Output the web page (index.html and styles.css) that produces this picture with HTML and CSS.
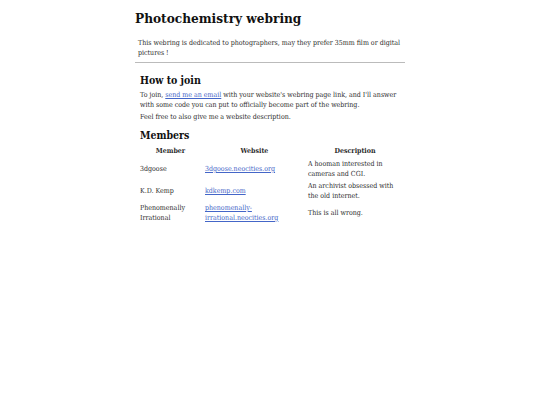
FILE: index.html
```html
<!DOCTYPE html>
<html lang="en">
<head>
    <meta charset="UTF-8">
    <title>Photochemistry webring</title>
    <link rel="stylesheet" href="styles.css">
</head>
<body>
    <div class="container">
        <h1>Photochemistry webring</h1>
        <div class="intro">
            <p>This webring is dedicated to photographers, may they prefer 35mm film or digital pictures !</p>
        </div>

        <div class="section">
            <h2>How to join</h2>
            <p>To join, <a href="#">send me an email</a> with your website's webring page link, and I'll answer with some code you can put to officially become part of the webring.</p>
            <p>Feel free to also give me a website description.</p>

            <h2>Members</h2>
            <table class="members">
                <thead>
                    <tr>
                        <th class="col-member">Member</th>
                        <th class="col-site">Website</th>
                        <th class="col-desc">Description</th>
                    </tr>
                </thead>
                <tbody>
                    <tr>
                        <td>3dgoose</td>
                        <td><a href="#">3dgoose.neocities.org</a></td>
                        <td>A hooman interested in cameras and CGI.</td>
                    </tr>
                    <tr>
                        <td>K.D. Kemp</td>
                        <td><a href="#">kdkemp.com</a></td>
                        <td>An archivist obsessed with the old internet.</td>
                    </tr>
                    <tr>
                        <td>Phenomenally Irrational</td>
                        <td><a href="#">phenomenally-irrational.neocities.org</a></td>
                        <td>This is all wrong.</td>
                    </tr>
                </tbody>
            </table>
        </div>
    </div>
</body>
</html>
```

FILE: styles.css
```css
body {
    font-family: "DejaVu Serif Condensed", "DejaVu Serif", serif;
    background: #fff;
    color: #2b2b2b;
    margin: 0;
}

.container {
    width: 270px;
    margin: 0 auto;
}

h1 {
    font-size: 13.5px;
    line-height: 18px;
    margin: 9px 0 0 0;
    color: #111;
}

.intro {
    padding: 11px 3px 4px 3px;
    border-bottom: 1px solid #bbb;
}

p {
    font-size: 7px;
    line-height: 10px;
    margin: 0;
}

.section {
    padding: 4px 5px 0 5px;
}

.section p {
    margin-bottom: 2px;
}

h2 {
    font-size: 10.5px;
    line-height: 14px;
    margin: 6px 0 3px 0;
    color: #111;
}

a {
    color: #4466c8;
}

.members {
    border-collapse: collapse;
    font-size: 7px;
    line-height: 10px;
    width: 266px;
    margin-left: -2px;
}

.members th {
    font-weight: bold;
    text-align: center;
    padding: 1px 2px 2px 2px;
}

.members td {
    padding: 1px 2px;
    vertical-align: middle;
}

.col-member { width: 61px; }
.col-site { width: 99px; }
```
